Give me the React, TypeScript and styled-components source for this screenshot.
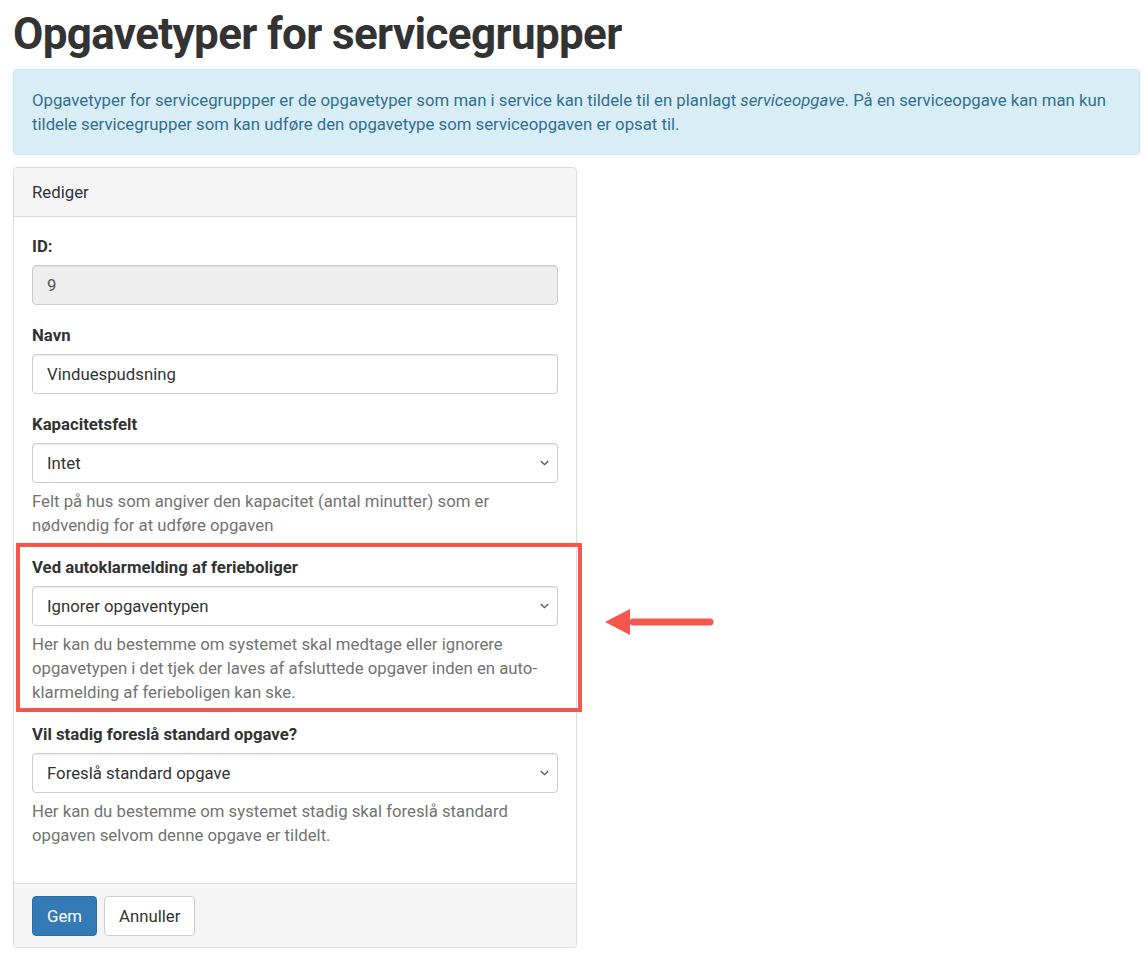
import React from "react";
import styled, { createGlobalStyle } from "styled-components";

const GlobalStyle = createGlobalStyle`
  html, body { margin: 0; padding: 0; background: #fff; }
  body {
    font-family: Roboto, "Helvetica Neue", Arial, sans-serif;
    font-size: 16.75px;
    line-height: 24px;
    color: #333;
  }
  * { box-sizing: border-box; }
`;

const Page = styled.div`
  padding: 0 8px 0 13px;
`;

const Title = styled.h1`
  margin: 9px 0 10px;
  font-size: 44px;
  line-height: 50px;
  font-weight: 700;
  letter-spacing: -0.65px;
  color: #333;
`;

const Alert = styled.div`
  background: #d9edf7;
  border: 1px solid #bce8f1;
  border-radius: 4px;
  color: #31708f;
  padding: 18px 18px;
  margin-bottom: 12px;
  line-height: 24px;
`;

const Panel = styled.div`
  width: 564px;
  border: 1px solid #ddd;
  border-radius: 4px;
  box-shadow: 0 1px 1px rgba(0, 0, 0, 0.05);
  background: #fff;
`;

const PanelHeading = styled.div`
  background: #f5f5f5;
  border-bottom: 1px solid #ddd;
  border-radius: 3px 3px 0 0;
  padding: 12px 18px;
  color: #333;
`;

const PanelBody = styled.div`
  padding: 17px 18px 36px;
  display: flex;
  flex-direction: column;
  gap: 18px;
`;

const FormGroup = styled.div`
  position: relative;
  display: flex;
  flex-direction: column;
`;

const Highlight = styled.div`
  position: absolute;
  left: -16px;
  right: -24px;
  top: -12px;
  bottom: -8px;
  border: 4px solid #f4574b;
  pointer-events: none;
`;

const Arrow = styled.svg`
  position: absolute;
  left: 571px;
  top: 52px;
  width: 112px;
  height: 32px;
  overflow: visible;
`;

const Label = styled.label`
  font-weight: 700;
  margin-bottom: 7px;
  display: block;
`;

const Field = styled.div<{ $readonly?: boolean }>`
  height: 40px;
  border: 1px solid #ccc;
  border-radius: 4px;
  background: ${(p) => (p.$readonly ? "#eee" : "#fff")};
  box-shadow: inset 0 1px 1px rgba(0, 0, 0, 0.075);
  padding: 0 8px 0 14px;
  display: flex;
  align-items: center;
  justify-content: space-between;
  color: ${(p) => (p.$readonly ? "#555" : "#333")};
`;

const Chevron = () => (
  <svg width="9" height="6" viewBox="0 0 9 6">
    <path d="M0.8 1l3.7 3.7L8.2 1" fill="none" stroke="#555" strokeWidth="1.3" />
  </svg>
);

const Help = styled.p`
  margin: 6px 0 0;
  color: #737373;
`;

const PanelFooter = styled.div`
  background: #f5f5f5;
  border-top: 1px solid #ddd;
  border-radius: 0 0 3px 3px;
  padding: 12px 18px 11px;
  display: flex;
  gap: 7px;
`;

const Button = styled.button<{ $primary?: boolean }>`
  height: 40px;
  padding: 0 14px;
  font-family: Roboto, "Helvetica Neue", Arial, sans-serif;
  font-size: 16.75px;
  border-radius: 4px;
  border: 1px solid ${(p) => (p.$primary ? "#2e6da4" : "#ccc")};
  background: ${(p) => (p.$primary ? "#337ab7" : "#fff")};
  color: ${(p) => (p.$primary ? "#fff" : "#333")};
  cursor: pointer;
`;

export default function App() {
  return (
    <Page>
      <GlobalStyle />
      <Title>Opgavetyper for servicegrupper</Title>
      <Alert>
        Opgavetyper for servicegruppper er de opgavetyper som man i service kan tildele til en planlagt{" "}
        <em>serviceopgave</em>. På en serviceopgave kan man kun tildele servicegrupper som kan udføre den
        opgavetype som serviceopgaven er opsat til.
      </Alert>
      <Panel>
        <PanelHeading>Rediger</PanelHeading>
        <PanelBody>
          <FormGroup>
            <Label>ID:</Label>
            <Field $readonly>9</Field>
          </FormGroup>
          <FormGroup>
            <Label>Navn</Label>
            <Field>Vinduespudsning</Field>
          </FormGroup>
          <FormGroup>
            <Label>Kapacitetsfelt</Label>
            <Field>
              <span>Intet</span>
              <Chevron />
            </Field>
            <Help>Felt på hus som angiver den kapacitet (antal minutter) som er nødvendig for at udføre opgaven</Help>
          </FormGroup>
          <FormGroup>
            <Label>Ved autoklarmelding af ferieboliger</Label>
            <Field>
              <span>Ignorer opgaventypen</span>
              <Chevron />
            </Field>
            <Help>
              Her kan du bestemme om systemet skal medtage eller ignorere opgavetypen i det tjek der laves af
              afsluttede opgaver inden en auto-klarmelding af ferieboligen kan ske.
            </Help>
            <Highlight />
            <Arrow viewBox="0 0 112 32">
              <path d="M30 15H107" stroke="#f4574b" strokeWidth="7" strokeLinecap="round" />
              <path d="M2 15L27 2V28Z" fill="#f4574b" />
            </Arrow>
          </FormGroup>
          <FormGroup>
            <Label>Vil stadig foreslå standard opgave?</Label>
            <Field>
              <span>Foreslå standard opgave</span>
              <Chevron />
            </Field>
            <Help>Her kan du bestemme om systemet stadig skal foreslå standard opgaven selvom denne opgave er tildelt.</Help>
          </FormGroup>
        </PanelBody>
        <PanelFooter>
          <Button $primary>Gem</Button>
          <Button>Annuller</Button>
        </PanelFooter>
      </Panel>
    </Page>
  );
}
